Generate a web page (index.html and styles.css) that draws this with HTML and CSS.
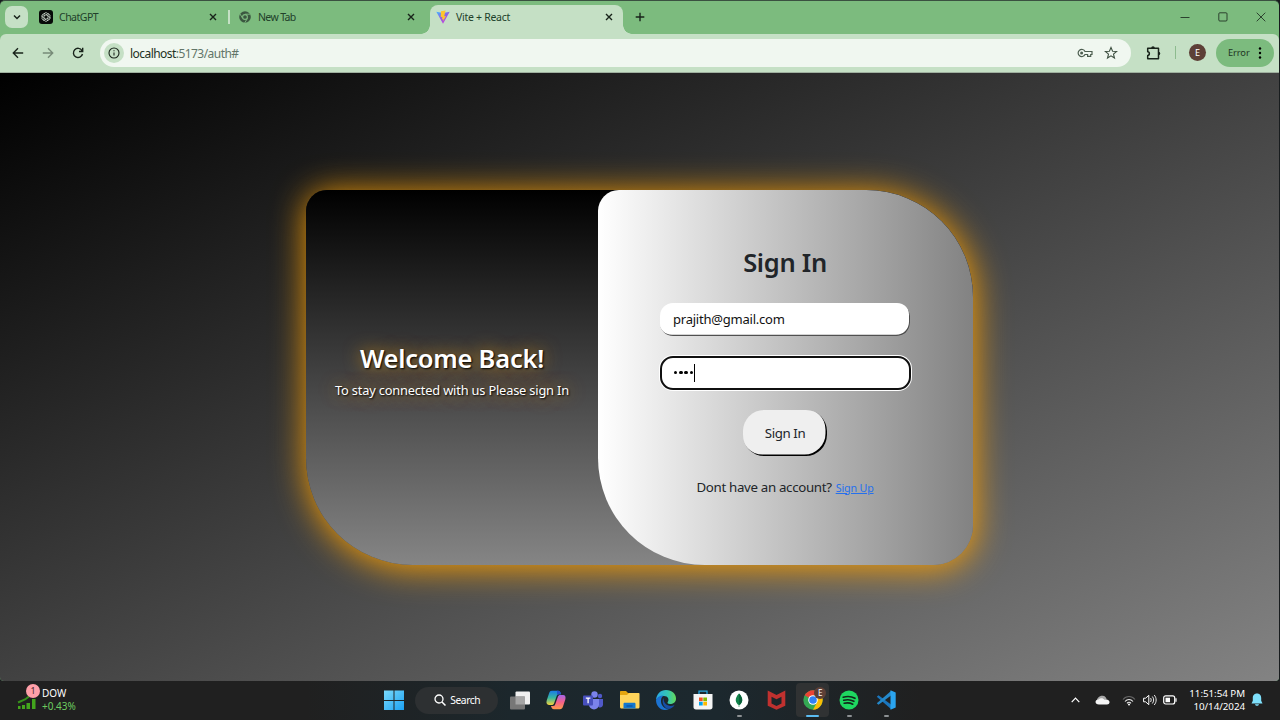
FILE: index.html
```
<!DOCTYPE html>
<html lang="en">
<head>
<meta charset="utf-8">
<title>Vite + React</title>
<link rel="stylesheet" href="styles.css">
</head>
<body>
<div class="desktop">
  <div class="browser">
    <div class="tabstrip">
      <div class="tab-search"><svg width="10" height="10" viewBox="0 0 10 10"><path d="M2 3.5l3 3 3-3" class="ln w15"/></svg></div>
      <div class="tab tab-first">
        <svg class="fav" width="14" height="14" viewBox="0 0 14 14"><rect width="14" height="14" rx="3" fill="#070b08"/><g fill="none" stroke="#c8d4c9" stroke-width=".8"><path id="petal" d="M5 8.2V4.600a2 2 0 0 1 3.600-1.100L10 4.400"/><use href="#petal" transform="rotate(60 7 7)"/><use href="#petal" transform="rotate(120 7 7)"/><use href="#petal" transform="rotate(180 7 7)"/><use href="#petal" transform="rotate(240 7 7)"/><use href="#petal" transform="rotate(300 7 7)"/></g></svg>
        <span class="tab-title t-chat">ChatGPT</span>
        <svg class="x" width="8" height="8" viewBox="0 0 8 8"><path d="M1 1l6 6M7 1L1 7" class="ln w13"/></svg>
      </div>
      <div class="divider"></div>
      <div class="tab tab-second">
        <svg class="fav" width="12" height="12" viewBox="0 0 12 12"><circle cx="6" cy="6" r="5.8" fill="#3b5740"/><circle cx="6" cy="6" r="2.4" fill="#3b5740" stroke="#7fbc80" stroke-width="1.1"/><path d="M6 3.2h5.300M3.600 7.400L1 2.900M8.400 7.400l-2.700 4.500" stroke="#7fbc80" stroke-width=".9"/></svg>
        <span class="tab-title t-new">New Tab</span>
        <svg class="x" width="8" height="8" viewBox="0 0 8 8"><path d="M1 1l6 6M7 1L1 7" class="ln w13"/></svg>
      </div>
      <div class="tab tab-active">
        <svg class="fav" width="14" height="14" viewBox="0 0 14 14"><defs><linearGradient id="vg" x2=".6" y2="1"><stop stop-color="#41b8ff"/><stop offset=".5" stop-color="#8a62e8"/><stop offset="1" stop-color="#c53ede"/></linearGradient></defs><path d="M.3 1.800L7 13.800l6.700-12L7 3z" fill="url(#vg)"/><path d="M9.600.400L5 1.300l-.3 6 1.700-.3-.5 2.500 1.500-.4-.6 2.300 3.200-5.500-1.800.3z" fill="#ffc52e"/></svg>
        <span class="tab-title t-vite">Vite + React</span>
        <svg class="x" width="8" height="8" viewBox="0 0 8 8"><path d="M1 1l6 6M7 1L1 7" class="ln w13"/></svg>
      </div>
      <svg class="plus" width="10" height="10" viewBox="0 0 10 10"><path d="M5 .7v8.600M.7 5h8.600" class="ln w13"/></svg>
      <div class="window-buttons">
        <svg width="10" height="10" viewBox="0 0 10 10"><path d="M.5 5.500h9" class="ln w07"/></svg>
        <svg width="10" height="10" viewBox="0 0 10 10"><rect x=".8" y=".8" width="8.200" height="8.200" rx="1" class="ln w07"/></svg>
        <svg width="10" height="10" viewBox="0 0 10 10"><path d="M.7.700l8.600 8.600M9.300.700L.7 9.300" class="ln w07"/></svg>
      </div>
    </div>
    <div class="toolbar">
      <svg class="nav" width="12" height="12" viewBox="0 0 12 12"><path d="M11.200 6H1.500M6 1.300L1.300 6 6 10.700" class="ln w13"/></svg>
      <svg class="nav dim" width="12" height="12" viewBox="0 0 12 12"><path d="M.8 6h9.700M6 1.300L10.700 6 6 10.700" class="ln w13"/></svg>
      <svg class="nav" width="12" height="12" viewBox="0 0 12 12"><path d="M10 3.600A4.600 4.600 0 1 0 10.500 7M10.700.8v3.700H7" class="ln w13"/></svg>
      <div class="omnibox">
        <div class="info"><svg width="12" height="12" viewBox="0 0 12 12"><circle cx="6" cy="6" r="5" class="ln w11"/><path d="M6 5.400v3.200M6 3.200v1.100" class="ln w11"/></svg></div>
        <div class="url"><span>localhost</span>:5173/auth#</div>
        <svg class="key" width="16" height="10" viewBox="0 0 16 10"><path d="M8 3.500A3.600 3.600 0 1 0 8 6.500h2.600v1.900h3.100V6.500H15v-3z" fill="none" stroke="#4d5e50" stroke-width="1.200"/><circle cx="4.600" cy="5" r="1.500" fill="#4d5e50"/></svg>
        <svg width="14" height="14" viewBox="0 0 14 14"><path d="M7 1.500l1.600 3.700 4 .3-3.100 2.600 1 3.900L7 9.900 3.500 12l1-3.900L1.400 5.500l4-.3z" fill="none" stroke="#3f5142" stroke-width="1.100"/></svg>
      </div>
      <svg class="ext" width="15" height="16" viewBox="0 0 15 16"><path d="M1.700 3.200h10.800v10.600H1.700v-3.300c2.200 0 2.200-3.800 0-3.800z" class="ln w15" stroke-linejoin="round"/><path d="M5.200 3a1.800 1.800 0 0 1 3.600 0zM12.500 6.700a1.800 1.800 0 0 1 0 3.600z" fill="#18231a"/></svg>
      <div class="bar-divider"></div>
      <div class="avatar">E</div>
      <div class="error-pill"><span>Error</span><svg width="4" height="14" viewBox="0 0 4 14"><circle cx="2" cy="2.500" r="1.200"/><circle cx="2" cy="7" r="1.200"/><circle cx="2" cy="11.500" r="1.200"/></svg></div>
    </div>
    <main class="page">
      <section class="card">
        <div class="welcome">
          <h1>Welcome Back!</h1>
          <p>To stay connected with us Please sign In</p>
        </div>
        <div class="form">
          <h2>Sign In</h2>
          <div class="field"><span>prajith@gmail.com</span></div>
          <div class="field focused"><i></i><i></i><i></i><i></i><b></b></div>
          <div class="submit"><span>Sign In</span></div>
          <div class="signup"><span class="ask">Dont have an account?</span><a>Sign Up</a></div>
        </div>
      </section>
    </main>
  </div>
  <footer class="taskbar">
    <div class="widget">
      <div class="stock"><svg width="20" height="16" viewBox="0 0 20 16"><g fill="#43a51d"><rect x="1" y="12" width="2.500" height="3"/><rect x="5" y="11" width="3" height="4"/><rect x="9.500" y="9" width="3.500" height="6"/><rect x="15" y="5" width="3.500" height="10"/></g><path d="M1 8.500l7-3 4-3" stroke="#37911b" stroke-width="2" fill="none"/></svg><span class="badge">1</span></div>
      <div class="quote"><div class="dow">DOW</div><div class="gain">+0.43%</div></div>
    </div>
    <div class="apps">
      <div class="app"><svg width="20" height="20" viewBox="0 0 20 20"><defs><linearGradient id="wg" x2="1" y2="1"><stop stop-color="#7ad9fb"/><stop offset="1" stop-color="#1ba1f2"/></linearGradient></defs><path d="M0 .5h9.500V10H0zM10.500.5H20V10h-9.500zM0 11h9.500v9H0zM10.500 11H20v9h-9.500z" fill="url(#wg)"/></svg></div>
      <div class="search"><svg width="12" height="12" viewBox="0 0 12 12"><circle cx="5" cy="5" r="4" fill="none" stroke="#fff" stroke-width="1.300"/><path d="M8 8l3.500 3.500" stroke="#fff" stroke-width="1.500"/></svg><span>Search</span></div>
      <div class="app"><svg width="20" height="19" viewBox="0 0 20 19"><rect x="5.500" y=".5" width="14.500" height="13" rx="1" fill="#f0f0f0"/><rect y="5.500" width="15" height="13" rx="1" fill="#777"/><path d="M5.500 5.500H15v8H5.500z" fill="#a5a5a5"/></svg></div>
      <div class="app"><svg width="20" height="20" viewBox="0 0 20 20"><defs><linearGradient id="c1" x2="0" y2="1"><stop stop-color="#1a7be8"/><stop offset=".5" stop-color="#38b7a0"/><stop offset="1" stop-color="#f5d33b"/></linearGradient><linearGradient id="c2" x2="0" y2="1"><stop stop-color="#a565e8"/><stop offset=".5" stop-color="#f4608a"/><stop offset="1" stop-color="#ff9a4a"/></linearGradient></defs><path d="M6 .8h6c2 0 2.500 1.500 3 3.500h-2c-1.500 0-2 .8-2.500 2.200L8.200 13c-.5 1.600-1.300 2-2.700 2H3C.7 15 0 13 .7 10.600L3 3.500C3.600 1.500 4.500.8 6 .8z" fill="url(#c1)"/><path d="M14 19.200H8c-2 0-2.500-1.500-3-3.200h2c1.500 0 2-.8 2.500-2.500L11.800 7c.5-1.600 1.300-2 2.700-2H17c2.300 0 3 2 2.300 4.400L17 16.500c-.6 2-1.500 2.700-3 2.700z" fill="url(#c2)"/><path d="M11 .8h1c2 0 2.500 1.500 3 3.500h-2c-1 0-1.500.4-2 1.300z" fill="#2452cc"/></svg></div>
      <div class="app"><svg width="20" height="19" viewBox="0 0 20 19"><circle cx="11.500" cy="3.500" r="3.200" fill="#7b83eb"/><circle cx="17" cy="5" r="2.200" fill="#5059c9"/><path d="M14 8h6v5.500c0 2.800-3 3.700-4.500 2.500z" fill="#5059c9"/><path d="M6 8h10v5.500a5 5 0 0 1-10 0z" fill="#7b83eb"/><rect y="4.500" width="10" height="10" rx="1" fill="#474fbd"/><path d="M2.800 7.200h4.600M5.100 7.200v5" stroke="#fff" stroke-width="1.300"/></svg></div>
      <div class="app"><svg width="21" height="20" viewBox="0 0 21 20"><path d="M1 2c0-.8.5-1 1-1h5l2 2h10c.8 0 1 .5 1 1v4H1z" fill="#e5a50e"/><path d="M1 5h7l2-2h9.500c.8 0 1 .5 1 1v13c0 .8-.5 1.500-1.500 1.500H2.500c-1 0-1.500-.7-1.500-1.500z" fill="#ffd45a"/><path d="M4.500 18.500V14c0-.8.5-1.300 1.200-1.300h9.600c.7 0 1.200.5 1.200 1.300v4.500z" fill="#1277cf"/><path d="M7.500 16h6" stroke="#0a4f9c" stroke-width="1.200"/></svg></div>
      <div class="app"><svg width="20" height="20" viewBox="0 0 20 20"><defs><linearGradient id="eg" x2="1"><stop stop-color="#28a7e8"/><stop offset=".6" stop-color="#35c7b0"/><stop offset="1" stop-color="#66d958"/></linearGradient></defs><path d="M0 10C.5 4 4.500 0 10 0c6 0 10 4 10 8.500 0 4-3 5.500-6 5.500-2.500 0-3-1.200-2.200-2C13.500 9.500 12 6 8 6c-4 0-7 2-8 4z" fill="url(#eg)"/><path d="M0 10c1-3 4-4.500 7.500-4.500C5.500 7 5 9 5 11c0 4.500 3.500 8 8 8-7 3-13-2-13-9z" fill="#1c73d2"/><path d="M7.500 8C5.500 11 7 18.500 13 19c2.500-.5 4.500-2 5.500-4C13 17.500 7.500 14.500 7.500 8z" fill="#174ea6"/></svg></div>
      <div class="app"><svg width="20" height="20" viewBox="0 0 20 20"><path d="M6 5V1.200h8V5" fill="none" stroke="#28a5dd" stroke-width="1.300"/><path d="M.5 4h19v13c0 1.500-.8 2.500-2.500 2.500H3C1.300 19.500.5 18.500.5 17z" fill="#f5f5f5"/><path fill="#f25022" d="M6 7.500h3.700v3.700H6z"/><path fill="#7fba00" d="M10.300 7.500H14v3.700h-3.700z"/><path fill="#00a4ef" d="M6 11.800h3.700v3.700H6z"/><path fill="#ffb900" d="M10.300 11.800H14v3.700h-3.700z"/></svg></div>
      <div class="app run"><svg width="20" height="20" viewBox="0 0 20 20"><circle cx="10" cy="10" r="9.500" fill="#fff"/><path d="M10 3.500c5 5 3.500 9.500.3 11.500V17h-.6v-2C6.500 13 5 8.500 10 3.500z" fill="#11834b"/><path d="M10 3.500c5 5 3.500 9.500.3 11.500z" fill="#086039"/></svg></div>
      <div class="app"><svg width="19" height="20" viewBox="0 0 19 20"><path d="M.7.500l8.800 4.500L18.300.500v15.300l-8.800 3.900-8.800-3.900zM4.500 6.700v6.900l5 2.300 5-2.300V6.700L9.500 9.200z" fill="#c0312f"/></svg></div>
      <div class="app current"><svg width="20" height="20" viewBox="0 0 20 20"><circle cx="10" cy="10" r="9.700" fill="#34a853"/><path d="M10 10L1.600 5.200A9.700 9.700 0 0 1 18.400 5.200H10z" fill="#ea4335"/><path d="M10 10L18.400 5.200A9.700 9.700 0 0 1 10 19.700L14.200 12z" fill="#fbbc04"/><circle cx="10" cy="10" r="4.800" fill="#fff"/><circle cx="10" cy="10" r="3.800" fill="#3180f5"/></svg><span class="profile">E</span></div>
      <div class="app run"><svg width="20" height="20" viewBox="0 0 20 20"><circle cx="10" cy="10" r="9.500" fill="#1ed760"/><path d="M4.200 7.200c4-1.200 8.500-.8 11.800 1.100M4.700 10.300c3.500-1 7.300-.6 10.200 1M5.200 13.300c3-.8 6-.5 8.600.9" fill="none" stroke="#13251a" stroke-width="1.600" stroke-linecap="round"/></svg></div>
      <div class="app run"><svg width="20" height="20" viewBox="0 0 20 20"><path d="M.8 6.700l1.700-1.500L15 14.500V19z" fill="#1b76bd"/><path d="M.8 13.300l1.700 1.500L15 5.500V1z" fill="#2489ca"/><path d="M14.500.3L19.700 2.500v15l-5.200 2.200z" fill="#2aa4ef"/></svg></div>
    </div>
    <div class="tray">
      <svg class="chev" width="9" height="6" viewBox="0 0 9 6"><path d="M.7 5.200L4.500 1.200l3.800 4" fill="none" stroke="#fff" stroke-width="1.200"/></svg>
      <svg class="cloud" width="15" height="10" viewBox="0 0 15 10"><path d="M2 6.500C1.500 3 4.500.5 7.500.7c2.500.1 4 1.800 4.200 3.800z" fill="#a8a8a8"/><path d="M4 9.500C-.5 9.500-.5 4.500 3.500 4.500c2-2 5-1.200 6 .3 3-1 5.500 1 5 2.700-.2 1.300-1 2-2.500 2z" fill="#f5f5f5"/></svg>
      <svg class="wifi" width="14" height="11" viewBox="0 0 14 11" fill="none" stroke-width="1.100"><path d="M1 4.500c3.300-4 8.700-4 12 0" stroke="#666"/><path d="M3 6.500c2.200-2.700 5.800-2.700 8 0M5 8.300c1.200-1.400 2.800-1.400 4 0" stroke="#eee"/><circle cx="7" cy="9.500" r="1" fill="#fff"/></svg>
      <svg class="sound" width="14" height="12" viewBox="0 0 14 12" fill="none" stroke="#fff"><path d="M.6 4.200h2L5.800 1.300v9.400L2.600 7.800h-2z"/><path d="M7.500 4c.9 1.200.9 2.800 0 4M9.300 2.500c1.800 2 1.800 5 0 7M11.200 1c2.600 3 2.600 7 0 10" stroke-width=".9"/></svg>
      <svg class="batt" width="14" height="10" viewBox="0 0 14 10"><rect x=".7" y=".8" width="11" height="8.200" rx="2" fill="none" stroke="#fff" stroke-width="1.200"/><rect x="2.500" y="2.700" width="4.500" height="4.500" fill="#fff"/><path d="M13 3.200v3.500" stroke="#fff" stroke-width="1.200"/></svg>
      <div class="clock"><div class="time">11:51:54 PM</div><div class="date">10/14/2024</div></div>
      <svg class="bell" width="12" height="14" viewBox="0 0 12 14"><path d="M6 .5C3 .5 1.800 2.700 1.800 5v2.700L.5 10.500h11l-1.300-2.800V5C10.200 2.700 9 .5 6 .5zM4 11.300h4c-.5 2-3.500 2-4 0z" fill="#7fe0fb"/></svg>
    </div>
  </footer>
</div>
</body>
</html>
```
FILE: styles.css
```
* { box-sizing: border-box; }
body { margin: 0; background: #111; font-family: "Noto Sans", "Open Sans", sans-serif; color: #1e3423; }
svg { display: block; flex: none; overflow: visible; }
.desktop { width: 1280px; height: 720px; display: flex; flex-direction: column; overflow: hidden; background: #181c1e; }
.browser { height: 681px; flex: none; width: 1279px; display: flex; flex-direction: column; border-top: 1px solid #3a5040; border-radius: 5px 5px 4px 4px; overflow: hidden; background: #7cbb7e; }
.ln { fill: none; stroke: #18231a; }
.w15 { stroke-width: 1.5; }
.w13 { stroke-width: 1.4; }
.w11 { stroke-width: 1.1; }
.w07 { stroke-width: .8; }

.tabstrip { height: 33px; flex: none; display: flex; padding-left: 5px; }
.tab-search { width: 23px; height: 22px; margin-top: 5px; border-radius: 7px; background: #c5e0c5; display: flex; align-items: center; justify-content: center; }
.tab { display: flex; align-items: center; }
.tab-title { font-size: 10.5px; line-height: 16px; margin-right: auto; white-space: nowrap; color: #21402a; }
.t-chat { letter-spacing: -.5px; }
.t-new { letter-spacing: -.62px; }
.t-vite { letter-spacing: -.28px; }
.tab-first { width: 200px; padding: 0 11px 0 11px; gap: 6px; height: 32px; }
.divider { width: 2px; height: 14px; margin-top: 9px; background: #c5e0c5; }
.tab-second { width: 200px; padding: 0 15px 0 9px; gap: 7px; height: 32px; }
.tab-active { position: relative; width: 193px; height: 29px; margin-top: 4px; padding: 0 10px 5px 6px; gap: 6px; background: #c5e0c5; border-radius: 8px 8px 0 0; }
.tab-active::before, .tab-active::after { content: ""; position: absolute; bottom: 0; width: 9px; height: 9px; }
.tab-active::before { right: 100%; background: radial-gradient(circle at 0 0, transparent 8.5px, #c5e0c5 9px); }
.tab-active::after { left: 100%; background: radial-gradient(circle at 100% 0, transparent 8.5px, #c5e0c5 9px); }
.plus { margin: 11px 0 0 12px; }
.window-buttons { margin: 11px 13px 0 auto; display: flex; gap: 28px; }

.toolbar { height: 39px; flex: none; display: flex; align-items: center; background: #c5e0c5; padding: 0 5px 1px 12px; border-bottom: 1px solid #9fb09f; border-radius: 6px 6px 0 0; }
.nav { margin-right: 18px; }
.nav.dim { opacity: .45; }
.omnibox { width: 1031px; height: 28px; margin-left: -2px; border-radius: 14px; background: #f0f7f0; display: flex; align-items: center; padding: 0 13px 0 4px; }
.info { width: 20px; height: 20px; border-radius: 50%; background: #c5e0c5; display: flex; align-items: center; justify-content: center; }
.url { font-size: 12px; letter-spacing: -.55px; margin-left: 6px; margin-right: auto; padding-top: 1px; color: #627568; }
.url span { color: #1d3123; }
.key { margin-right: 11px; }
.ext { margin-left: 15px; }
.bar-divider { width: 1px; height: 13px; margin-left: 14px; background: #8dbb8e; }
.avatar { width: 17px; height: 17px; margin-left: 13px; border-radius: 50%; background: #5d4037; color: #fff; font-size: 9px; line-height: 17px; text-align: center; }
.error-pill { margin-left: 10px; width: 58px; height: 28px; border-radius: 14px; background: #7cbb7e; display: flex; align-items: center; justify-content: space-between; padding: 0 12px; font-size: 9.3px; letter-spacing: -.1px; flex: none; }

.page { flex: 1; display: flex; justify-content: center; align-items: flex-start; padding-top: 116.5px; background: linear-gradient(to bottom right, #000, #838383); }
.card { width: 667px; height: 375px; display: flex; border-radius: 21px 107px 40px 107px; background: linear-gradient(#000, #858585); box-shadow: 1px 3px 34px #ffa200; overflow: hidden; }
.welcome { width: 292px; padding-top: 149px; text-align: center; color: #fff; text-shadow: 1px 1px 2px #000, 0 0 17px rgba(255, 165, 0, .7); white-space: nowrap; }
.welcome h1 { margin: 0; font-size: 25.5px; line-height: 38px; font-weight: 600; letter-spacing: -.22px; }
.welcome p { margin: 3px 0 0; font-size: 12.8px; line-height: 20px; letter-spacing: -.17px; }
.form { width: 375px; padding: 52px 1px 0 0; display: flex; flex-direction: column; align-items: center; border-radius: 21px 0 0 107px; background: linear-gradient(to right, #fff, #828282); color: #212529; }
.form h2 { margin: 0; font-size: 25.5px; line-height: 40px; font-weight: 600; letter-spacing: -.3px; }
.field { width: 250px; height: 33px; margin-top: 21px; padding: 0 13px; border-radius: 13px; background: #fff; box-shadow: inset -1px -1.300px 0 #505050; display: flex; align-items: center; font-size: 13px; letter-spacing: -.22px; color: #111; }
.field.focused { width: 251px; height: 34px; margin-top: 20px; border: 2px solid #101010; box-shadow: 0 0 0 1px #fff; padding-left: 12px; }
.field i { width: 3.8px; height: 3.8px; margin-right: 1.6px; border-radius: 50%; background: #000; }
.field b { width: 1px; height: 18px; margin-left: -1px; background: #000; }
.submit { width: 84px; height: 46px; margin-top: 20px; border-radius: 21px; background: #efefef; box-shadow: inset -1.500px -1.500px 0 #000; display: flex; align-items: center; justify-content: center; font-size: 13.3px; letter-spacing: -.4px; }
.signup { margin-top: 21px; display: flex; align-items: baseline; gap: 4px; font-size: 13.3px; line-height: 20px; letter-spacing: -.32px; white-space: nowrap; }
.signup a { font-size: 10.7px; letter-spacing: -.15px; color: #2470ed; text-decoration: underline; }

.taskbar { flex: 1; display: flex; align-items: center; padding-bottom: 1px; background: linear-gradient(to right, #202020, #202020 24%, #1c272c 40%, #1c282e 56%, #202020 72%); color: #fff; }
.widget { width: 375px; display: flex; align-items: center; padding-left: 17px; gap: 5px; }
.stock { position: relative; padding-top: 4px; }
.badge { position: absolute; left: 9px; top: -6px; width: 14px; height: 14px; border-radius: 50%; background: #ff9fa9; color: #46282b; font-size: 9px; line-height: 14px; text-align: center; }
.quote { font-size: 10px; line-height: 13.5px; }
.gain { color: #6ccb5f; }
.apps { display: flex; align-items: center; padding-left: 2px; }
.app { position: relative; width: 33px; height: 34px; margin-right: 3.65px; border-radius: 4px; display: flex; align-items: center; justify-content: center; }
.search { width: 83px; height: 27px; margin: 0 5px 0 1.500px; border-radius: 14px; background: #2d3032; display: flex; align-items: center; padding-left: 19px; gap: 4px; font-size: 10.3px; letter-spacing: -.4px; }
.run::after, .current::after { content: ""; position: absolute; left: 14px; bottom: 0; width: 5px; height: 2px; border-radius: 1px; background: #8d9193; }
.current { background: #303233; }
.current::after { left: 10px; width: 13px; background: #5bbcf2; }
.profile { position: absolute; left: 18px; top: 4px; width: 12px; height: 12px; border-radius: 50%; background: #5d4037; font-size: 8px; line-height: 12px; text-align: center; }
.tray { margin-left: auto; display: flex; align-items: center; padding-right: 17px; }
.cloud { margin-left: 15px; }
.wifi { margin-left: 12px; }
.sound { margin-left: 7px; }
.batt { margin-left: 6px; }
.clock { margin-left: 12px; width: 56px; display: flex; flex-direction: column; align-items: flex-end; font-size: 9.8px; letter-spacing: -.05px; line-height: 13px; white-space: nowrap; }
.bell { margin-left: 6px; }
```
